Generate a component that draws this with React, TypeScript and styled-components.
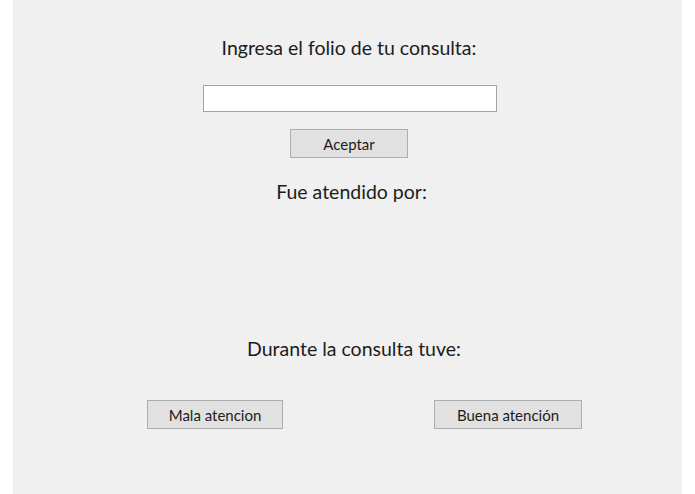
import React from "react";
import styled, { createGlobalStyle } from "styled-components";

const GlobalStyle = createGlobalStyle`
  html, body {
    margin: 0;
    padding: 0;
    background: #ffffff;
  }
  body {
    font-family: "Lato", "Liberation Sans", sans-serif;
  }
`;

const Panel = styled.div`
  margin-left: 13px;
  width: 669px;
  height: 494px;
  box-sizing: border-box;
  padding-left: 3px;
  background: #f0f0f0;
  display: flex;
  flex-direction: column;
  align-items: center;
`;

const Label = styled.div<{ $top: number; $shift?: number }>`
  margin-top: ${(p) => p.$top}px;
  margin-left: ${(p) => p.$shift ?? 0}px;
  font-size: 19.5px;
  line-height: 22px;
  color: #1c1c1c;
  white-space: nowrap;
`;

const TextInput = styled.input`
  margin-top: 26px;
  margin-left: 1px;
  width: 294px;
  height: 27px;
  box-sizing: border-box;
  border: 1px solid #a3a3a3;
  background: #ffffff;
  outline: none;
  padding: 0 4px;
  font-family: inherit;
  font-size: 14px;
`;

const Button = styled.button<{ $width: number }>`
  width: ${(p) => p.$width}px;
  height: 29px;
  box-sizing: border-box;
  border: 1px solid #adadad;
  background: #e1e1e1;
  color: #1c1c1c;
  font-family: "Lato", "Liberation Sans", sans-serif;
  font-size: 15px;
  padding: 0;
  cursor: pointer;
`;

const AcceptButton = styled(Button)`
  margin-top: 17px;
`;

const ButtonRow = styled.div`
  margin-top: 40px;
  align-self: stretch;
  display: flex;
  justify-content: space-between;
  padding: 0 100px 0 131px;
`;

export default function App() {
  return (
    <>
      <GlobalStyle />
      <Panel>
        <Label $top={37}>Ingresa el folio de tu consulta:</Label>
        <TextInput type="text" />
        <AcceptButton $width={118}>Aceptar</AcceptButton>
        <Label $top={23} $shift={5}>Fue atendido por:</Label>
        <Label $top={135} $shift={10}>Durante la consulta tuve:</Label>
        <ButtonRow>
          <Button $width={136}>Mala atencion</Button>
          <Button $width={148}>Buena atención</Button>
        </ButtonRow>
      </Panel>
    </>
  );
}
